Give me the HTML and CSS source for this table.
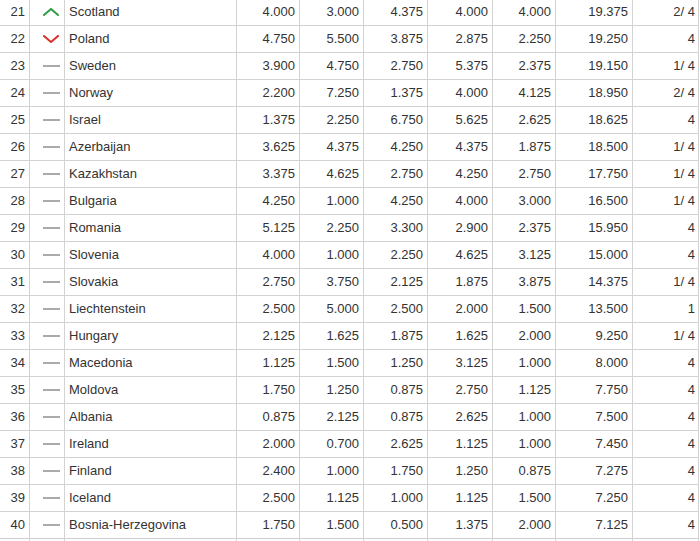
FILE: index.html
```html
<!DOCTYPE html>
<html lang="en">
<head>
<meta charset="utf-8">
<title>Ranking</title>
<link rel="stylesheet" href="styles.css">
</head>
<body>
<table class="rank-table">
  <colgroup>
    <col class="c-rank"><col class="c-trend"><col class="c-name">
    <col class="c-n1"><col class="c-n2"><col class="c-n3"><col class="c-n4"><col class="c-n5">
    <col class="c-total"><col class="c-last">
  </colgroup>
  <tbody>
    <tr><td class="rank">21</td><td class="trend"><svg class="ic up" viewBox="0 0 16 8"><polyline points="1,7 8,1 15,7"/></svg></td><td class="name">Scotland</td><td>4.000</td><td>3.000</td><td>4.375</td><td>4.000</td><td>4.000</td><td class="total">19.375</td><td class="last">2/ 4</td></tr>
    <tr><td class="rank">22</td><td class="trend"><svg class="ic down" viewBox="0 0 16 8"><polyline points="1,1 8,7 15,1"/></svg></td><td class="name">Poland</td><td>4.750</td><td>5.500</td><td>3.875</td><td>2.875</td><td>2.250</td><td class="total">19.250</td><td class="last">4</td></tr>
    <tr><td class="rank">23</td><td class="trend"><span class="dash"></span></td><td class="name">Sweden</td><td>3.900</td><td>4.750</td><td>2.750</td><td>5.375</td><td>2.375</td><td class="total">19.150</td><td class="last">1/ 4</td></tr>
    <tr><td class="rank">24</td><td class="trend"><span class="dash"></span></td><td class="name">Norway</td><td>2.200</td><td>7.250</td><td>1.375</td><td>4.000</td><td>4.125</td><td class="total">18.950</td><td class="last">2/ 4</td></tr>
    <tr><td class="rank">25</td><td class="trend"><span class="dash"></span></td><td class="name">Israel</td><td>1.375</td><td>2.250</td><td>6.750</td><td>5.625</td><td>2.625</td><td class="total">18.625</td><td class="last">4</td></tr>
    <tr><td class="rank">26</td><td class="trend"><span class="dash"></span></td><td class="name">Azerbaijan</td><td>3.625</td><td>4.375</td><td>4.250</td><td>4.375</td><td>1.875</td><td class="total">18.500</td><td class="last">1/ 4</td></tr>
    <tr><td class="rank">27</td><td class="trend"><span class="dash"></span></td><td class="name">Kazakhstan</td><td>3.375</td><td>4.625</td><td>2.750</td><td>4.250</td><td>2.750</td><td class="total">17.750</td><td class="last">1/ 4</td></tr>
    <tr><td class="rank">28</td><td class="trend"><span class="dash"></span></td><td class="name">Bulgaria</td><td>4.250</td><td>1.000</td><td>4.250</td><td>4.000</td><td>3.000</td><td class="total">16.500</td><td class="last">1/ 4</td></tr>
    <tr><td class="rank">29</td><td class="trend"><span class="dash"></span></td><td class="name">Romania</td><td>5.125</td><td>2.250</td><td>3.300</td><td>2.900</td><td>2.375</td><td class="total">15.950</td><td class="last">4</td></tr>
    <tr><td class="rank">30</td><td class="trend"><span class="dash"></span></td><td class="name">Slovenia</td><td>4.000</td><td>1.000</td><td>2.250</td><td>4.625</td><td>3.125</td><td class="total">15.000</td><td class="last">4</td></tr>
    <tr><td class="rank">31</td><td class="trend"><span class="dash"></span></td><td class="name">Slovakia</td><td>2.750</td><td>3.750</td><td>2.125</td><td>1.875</td><td>3.875</td><td class="total">14.375</td><td class="last">1/ 4</td></tr>
    <tr><td class="rank">32</td><td class="trend"><span class="dash"></span></td><td class="name">Liechtenstein</td><td>2.500</td><td>5.000</td><td>2.500</td><td>2.000</td><td>1.500</td><td class="total">13.500</td><td class="last">1</td></tr>
    <tr><td class="rank">33</td><td class="trend"><span class="dash"></span></td><td class="name">Hungary</td><td>2.125</td><td>1.625</td><td>1.875</td><td>1.625</td><td>2.000</td><td class="total">9.250</td><td class="last">1/ 4</td></tr>
    <tr><td class="rank">34</td><td class="trend"><span class="dash"></span></td><td class="name">Macedonia</td><td>1.125</td><td>1.500</td><td>1.250</td><td>3.125</td><td>1.000</td><td class="total">8.000</td><td class="last">4</td></tr>
    <tr><td class="rank">35</td><td class="trend"><span class="dash"></span></td><td class="name">Moldova</td><td>1.750</td><td>1.250</td><td>0.875</td><td>2.750</td><td>1.125</td><td class="total">7.750</td><td class="last">4</td></tr>
    <tr><td class="rank">36</td><td class="trend"><span class="dash"></span></td><td class="name">Albania</td><td>0.875</td><td>2.125</td><td>0.875</td><td>2.625</td><td>1.000</td><td class="total">7.500</td><td class="last">4</td></tr>
    <tr><td class="rank">37</td><td class="trend"><span class="dash"></span></td><td class="name">Ireland</td><td>2.000</td><td>0.700</td><td>2.625</td><td>1.125</td><td>1.000</td><td class="total">7.450</td><td class="last">4</td></tr>
    <tr><td class="rank">38</td><td class="trend"><span class="dash"></span></td><td class="name">Finland</td><td>2.400</td><td>1.000</td><td>1.750</td><td>1.250</td><td>0.875</td><td class="total">7.275</td><td class="last">4</td></tr>
    <tr><td class="rank">39</td><td class="trend"><span class="dash"></span></td><td class="name">Iceland</td><td>2.500</td><td>1.125</td><td>1.000</td><td>1.125</td><td>1.500</td><td class="total">7.250</td><td class="last">4</td></tr>
    <tr><td class="rank">40</td><td class="trend"><span class="dash"></span></td><td class="name">Bosnia-Herzegovina</td><td>1.750</td><td>1.500</td><td>0.500</td><td>1.375</td><td>2.000</td><td class="total">7.125</td><td class="last">4</td></tr>
    <tr class="cut"><td class="rank"></td><td class="trend"></td><td class="name"></td><td></td><td></td><td></td><td></td><td></td><td class="total"></td><td class="last"></td></tr>
  </tbody>
</table>
</body>
</html>
```

FILE: styles.css
```css
html, body {
  margin: 0;
  padding: 0;
  background: #fff;
  overflow: hidden;
}

body {
  font-family: "Liberation Sans", Arial, sans-serif;
  font-size: 13px;
  color: #333;
}

.rank-table {
  margin-top: -1px;
  border-collapse: separate;
  border-spacing: 0;
  table-layout: fixed;
  width: 699px;
}

.c-rank { width: 30px; }
.c-trend { width: 35px; }
.c-name { width: 172px; }
.c-n1 { width: 63px; }
.c-n2 { width: 64px; }
.c-n3 { width: 64px; }
.c-n4 { width: 65px; }
.c-n5 { width: 63px; }
.c-total { width: 77px; }
.c-last { width: 66px; }

.rank-table td {
  box-sizing: border-box;
  height: 27px;
  padding: 0 4px 0 0;
  border-right: 1px solid #d3d3d3;
  border-bottom: 1px solid #d3d3d3;
  text-align: right;
  vertical-align: middle;
  white-space: nowrap;
  line-height: 26px;
}

.rank-table td.trend {
  text-align: left;
  padding: 0 0 0 13px;
}

.rank-table td.name {
  text-align: left;
  padding-left: 4px;
}

.rank-table td.last { padding-right: 3px; }

.ic {
  display: block;
  width: 16px;
  height: 8px;
  fill: none;
  stroke-width: 2;
  stroke-linecap: square;
  stroke-linejoin: miter;
}

.ic.up { stroke: #2e9e46; }
.ic.down { stroke: #d8302c; }

.dash {
  display: block;
  width: 17px;
  height: 2px;
  background: #aaa;
}
```
